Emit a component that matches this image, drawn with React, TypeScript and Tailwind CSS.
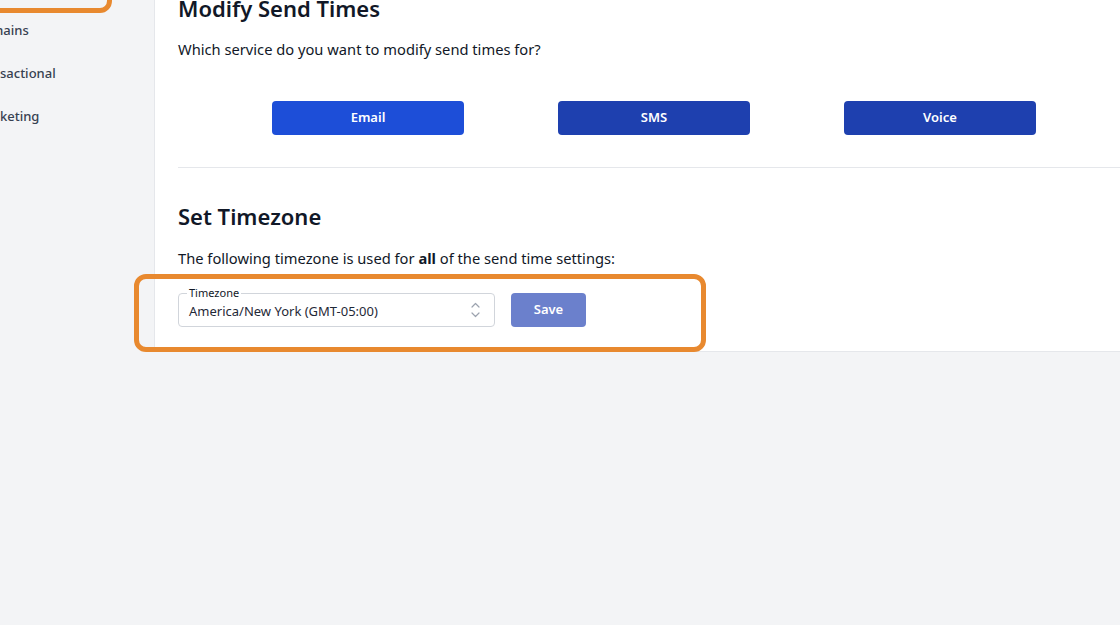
const font = { fontFamily: '"Noto Sans", "Open Sans", sans-serif' };

const SideItem = ({ label, className = "" }: { label: string; className?: string }) => (
	<div className={`h-[43px] flex items-center text-[13px] font-medium text-[#374151] ${className}`}>
		{label}
	</div>
);

const UpDown = () => (
	<svg width="9" height="16" viewBox="0 0 9 16" fill="none" stroke="#9ca3af" strokeWidth="1.2" strokeLinecap="round" strokeLinejoin="round">
		<path d="M1 5 L4.5 1.5 L8 5" />
		<path d="M1 11 L4.5 14.5 L8 11" />
	</svg>
);

export default function App() {
	return (
		<div
			className="relative w-[1120px] h-[625px] overflow-hidden bg-[#f3f4f6] flex items-start"
			style={font}
		>
			{/* sidebar, scrolled so only the word endings show */}
			<div className="w-[154px] shrink-0 pt-[9px] overflow-hidden">
				<SideItem label="mains" className="-ml-[9px]" />
				<SideItem label="sactional" />
				<SideItem label="keting" />
			</div>

			{/* main panel */}
			<div className="w-[1000px] shrink-0 bg-white border-l border-b border-[#e5e7eb] pl-[23px] pb-[24px]">
				<h1 className="-mt-[6px] text-[22px] leading-[28px] font-semibold text-[#111827]">
					Modify Send Times
				</h1>
				<p className="mt-[15px] text-[14.7px] leading-[24px] text-[#111827]">
					Which service do you want to modify send times for?
				</p>
				<div className="mt-[40px] w-[952px] flex justify-evenly">
					<button className="w-[192px] h-[34px] rounded-[4px] bg-[#1d4ed8] text-white text-[13px] font-semibold">
						Email
					</button>
					<button className="w-[192px] h-[34px] rounded-[4px] bg-[#1e40af] text-white text-[13px] font-semibold">
						SMS
					</button>
					<button className="w-[192px] h-[34px] rounded-[4px] bg-[#1e40af] text-white text-[13px] font-semibold">
						Voice
					</button>
				</div>
				<div className="mt-[32px] border-t border-[#e5e7eb]" />

				<h2 className="mt-[34px] text-[22px] leading-[28px] font-semibold text-[#111827]">
					Set Timezone
				</h2>
				<p className="mt-[16px] text-[14.7px] leading-[24px] text-[#111827]">
					The following timezone is used for <b className="font-bold">all</b> of the send time settings:
				</p>
				<div className="mt-[23px] flex items-center gap-4">
					<div className="relative w-[317px] h-[34px] rounded-[4px] border border-[#d1d5db] flex items-center justify-between pl-[10px] pr-[14px]">
						<span className="absolute -top-[7px] left-[8px] bg-white px-[2px] text-[11px] leading-[12px] text-[#111827]">
							Timezone
						</span>
						<span className="mt-[4px] text-[13px] text-[#1f2937]">America/New York (GMT-05:00)</span>
						<UpDown />
					</div>
					<button className="w-[75px] h-[34px] rounded-[4px] bg-[#6b80cc] text-white text-[13px] font-semibold">
						Save
					</button>
				</div>
			</div>

			{/* annotation highlights */}
			<div className="absolute -left-[20px] -top-[40px] w-[132px] h-[53px] rounded-[12px] border-[5px] border-[#e8892f]" />
			<div className="absolute left-[134px] top-[274px] w-[572px] h-[78px] rounded-[12px] border-[5px] border-[#e8892f]" />
		</div>
	);
}
